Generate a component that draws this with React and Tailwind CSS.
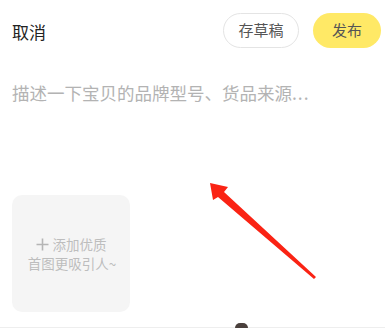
import React from 'react';

const font = { fontFamily: '"Noto Sans CJK SC", "Noto Sans", sans-serif' };

export default function App() {
  return (
    <div className="relative w-[385px] h-[328px] overflow-hidden bg-white" style={font}>
      {/* top bar */}
      <div className="flex items-center justify-between pl-3 pr-1 pt-[13px]">
        <span className="text-[17px] leading-6 text-[#222] mt-[2px]">取消</span>
        <div className="flex items-center gap-[14px]">
          <button className="h-[35px] w-[76px] rounded-full border border-[#e4e4e4] text-[15px] text-[#555]">
            存草稿
          </button>
          <button className="h-[35px] w-[68px] rounded-full bg-[#ffe966] text-[15px] text-[#555]">
            发布
          </button>
        </div>
      </div>

      {/* description */}
      <div className="px-3 pt-[33px] text-[17.5px] leading-6 text-[#b3b3b3]">
        描述一下宝贝的品牌型号、货品来源<span className="tracking-[1px]">...</span>
      </div>

      {/* image picker */}
      <div className="ml-3 mt-[90px] flex h-[117px] w-[118px] flex-col items-center justify-center gap-[1px] rounded-[10px] bg-[#f5f5f5] text-[13.5px] leading-[18px] text-[#bdbdbd]">
        <span className="flex items-center gap-[4px]">
          <svg width="13" height="13" viewBox="0 0 13 13">
            <path d="M6.5 0.5v12M0.5 6.5h12" stroke="#b5b5b5" strokeWidth="1.6" />
          </svg>
          添加优质
        </span>
        <span className="pl-[2px]">首图更吸引人~</span>
      </div>

      {/* bottom edge */}
      <div className="absolute bottom-0 left-0 right-0 h-[1px] bg-[#eeeeee]" />
      <div className="absolute bottom-0 left-[235px] h-[5px] w-[13px] rounded-t-full bg-[#4a403c]" />

      {/* annotation arrow */}
      <svg className="absolute left-0 top-0" width="385" height="328" viewBox="0 0 385 328">
        <polygon
          points="210,183 228,187 224,192 316,277 314,279 218,197 213,200"
          fill="#fa2314"
        />
      </svg>
    </div>
  );
}
